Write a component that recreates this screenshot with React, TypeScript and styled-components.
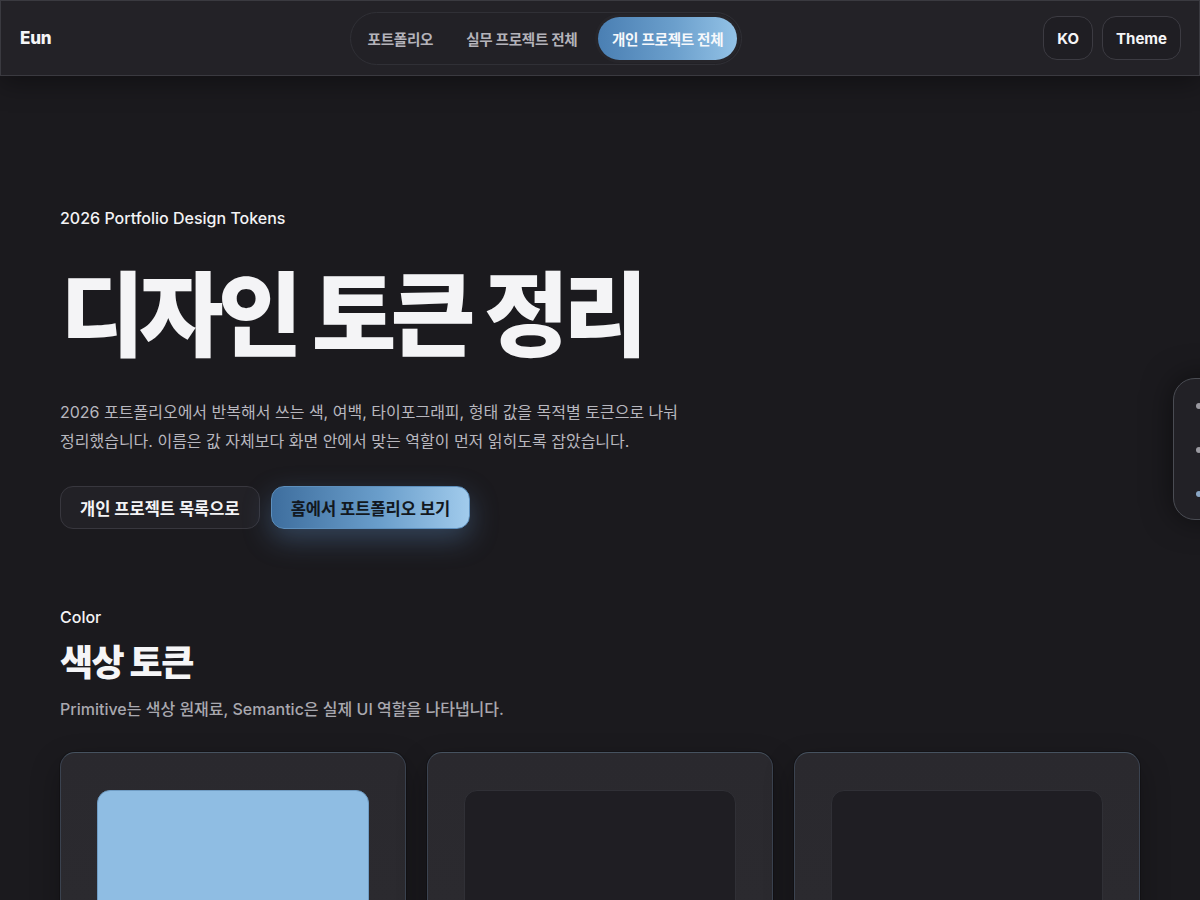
import React from 'react';
import styled, { createGlobalStyle } from 'styled-components';

const GlobalStyle = createGlobalStyle`
	body {
		margin: 0;
		background: #1b1a1e;
		color: #f3f3f5;
		font-family: Inter, 'Noto Sans CJK KR', sans-serif;
		overflow: hidden;
	}
`

const navItems = ['포트폴리오', '실무 프로젝트 전체', '개인 프로젝트 전체']

const swatches = [
	{ id: 'primary', fill: '#8fbde3', line: '#6f9cc4' },
	{ id: 'surface', fill: '#1f1e23', line: '#303036' },
	{ id: 'canvas', fill: '#1f1e23', line: '#303036' },
]

export default function App() {
	return (
		<>
			<GlobalStyle />
			<Header>
				<Logo>Eun</Logo>
				<Nav>
					{navItems.map((item, i) => (
						<NavItem key={item} $active={i === navItems.length - 1}>{item}</NavItem>
					))}
				</Nav>
				<Actions>
					<GhostButton>KO</GhostButton>
					<GhostButton>Theme</GhostButton>
				</Actions>
			</Header>

			<Main>
				<Hero>
					<Eyebrow>2026 Portfolio Design Tokens</Eyebrow>
					<Title>디자인 토큰 정리</Title>
					<Lead>
						2026 포트폴리오에서 반복해서 쓰는 색, 여백, 타이포그래피, 형태 값을 목적별 토큰으로 나눠
						정리했습니다. 이름은 값 자체보다 화면 안에서 맞는 역할이 먼저 읽히도록 잡았습니다.
					</Lead>
					<ButtonRow>
						<CtaButton>개인 프로젝트 목록으로</CtaButton>
						<CtaButton $primary>홈에서 포트폴리오 보기</CtaButton>
					</ButtonRow>
				</Hero>

				<Section>
					<SectionEyebrow>Color</SectionEyebrow>
					<SectionTitle>색상 토큰</SectionTitle>
					<SectionDesc>Primitive는 색상 원재료, Semantic은 실제 UI 역할을 나타냅니다.</SectionDesc>
					<CardGrid>
						{swatches.map((s) => (
							<Card key={s.id}>
								<Swatch $fill={s.fill} $line={s.line} />
							</Card>
						))}
					</CardGrid>
				</Section>
			</Main>

			<SideRail>
				<Dot />
				<Dot />
				<Dot $active />
			</SideRail>
		</>
	)
}

const Header = styled.header`
	position: relative;
	z-index: 2;
	height: 74px;
	display: flex;
	align-items: center;
	padding: 0 18px 0 19px;
	background: #232227;
	border: 1px solid #3a3a40;
	box-shadow: 0 8px 24px rgba(0, 0, 0, 0.35);
`

const Logo = styled.div`
	width: 330px;
	font-size: 17px;
	font-weight: 800;
	letter-spacing: -0.2px;
	color: #f5f5f7;
`

const Nav = styled.nav`
	display: flex;
	align-items: center;
	padding: 4px 4px 4px 0;
	border: 1px solid #303036;
	border-radius: 999px;
	background: #222126;
`

const NavItem = styled.a<{ $active?: boolean }>`
	display: flex;
	align-items: center;
	height: 43px;
	padding: 0 ${({ $active }) => ($active ? '14px' : '16.5px')};
	border-radius: 999px;
	font-size: 14.6px;
	font-weight: 700;
	letter-spacing: -0.3px;
	white-space: nowrap;
	color: ${({ $active }) => ($active ? '#f6f8fb' : '#b4b3ba')};
	background: ${({ $active }) => ($active ? 'linear-gradient(90deg, #4a7fb3 0%, #6b9fcc 55%, #93c2e6 100%)' : 'transparent')};
	box-shadow: ${({ $active }) => ($active ? '0 0 0 3px #26252a' : 'none')};
	margin-left: ${({ $active }) => ($active ? '4px' : '0')};
`

const Actions = styled.div`
	margin-left: auto;
	display: flex;
	gap: 9px;
`

const GhostButton = styled.button`
	height: 44px;
	padding: 0 13px;
	border: 1px solid #3c3b42;
	border-radius: 14px;
	background: #1f1e23;
	color: #f5f5f7;
	font-family: Inter, 'Noto Sans CJK KR', sans-serif;
	font-size: 15px;
	font-weight: 700;
`

const Main = styled.main`
	width: 1080px;
	margin: 0 auto;
	padding-top: 130px;
`

const Hero = styled.section`
	display: flex;
	flex-direction: column;
	align-items: flex-start;
`

const Eyebrow = styled.p`
	margin: 0;
	font-size: 16px;
	font-weight: 500;
	line-height: 24px;
	color: #f3f3f5;
`

const Title = styled.h1`
	margin: 30px 0 0;
	font-size: 92px;
	font-weight: 800;
	line-height: 112px;
	letter-spacing: -5.6px;
	color: #f4f4f6;
`

const Lead = styled.p`
	margin: 26px 0 0;
	max-width: 660px;
	font-size: 16px;
	line-height: 29px;
	word-break: keep-all;
	color: #b8b7be;
`

const ButtonRow = styled.div`
	display: flex;
	gap: 11px;
	margin-top: 30px;
`

const CtaButton = styled.button<{ $primary?: boolean }>`
	height: 43px;
	padding: 0 19px;
	border-radius: 13px;
	border: 1px solid ${({ $primary }) => ($primary ? '#5d8fbd' : '#38373e')};
	background: ${({ $primary }) => ($primary ? 'linear-gradient(90deg, #3e6e9e 0%, #6a9ecb 55%, #a1cbec 100%)' : '#222126')};
	color: ${({ $primary }) => ($primary ? '#121820' : '#f4f4f6')};
	box-shadow: ${({ $primary }) => ($primary ? '0 10px 28px rgba(96, 150, 205, 0.35)' : 'none')};
	font-family: Inter, 'Noto Sans CJK KR', sans-serif;
	font-size: 16.5px;
	font-weight: 700;
	white-space: nowrap;
`

const Section = styled.section`
	margin-top: 76px;
`

const SectionEyebrow = styled.p`
	margin: 0;
	font-size: 16px;
	font-weight: 500;
	line-height: 24px;
	color: #f3f3f5;
`

const SectionTitle = styled.h2`
	margin: 12px 0 0;
	font-size: 36px;
	font-weight: 800;
	line-height: 44px;
	letter-spacing: -1.5px;
	color: #f5f5f7;
`

const SectionDesc = styled.p`
	margin: 12px 0 0;
	font-size: 16px;
	font-weight: 500;
	line-height: 24px;
	color: #a9a8af;
`

const CardGrid = styled.div`
	display: grid;
	grid-template-columns: repeat(3, 1fr);
	gap: 21px;
	margin-top: 31px;
`

const Card = styled.div`
	height: 220px;
	padding: 37px 36px 0;
	border-radius: 15px;
	border: 1px solid #3b4350;
	border-top-color: #46525f;
	background: linear-gradient(180deg, #2a292e 0%, #2b2a2f 60%, #34333a 100%);
	box-shadow: 0 0 0 1px rgba(0, 0, 0, 0.2), 0 12px 30px rgba(0, 0, 0, 0.3);
`

const Swatch = styled.div<{ $fill: string; $line: string }>`
	height: 140px;
	border-radius: 13px;
	background: ${({ $fill }) => $fill};
	border: 1px solid ${({ $line }) => $line};
`

const SideRail = styled.div`
	position: fixed;
	top: 378px;
	left: 1173px;
	width: 60px;
	height: 142px;
	border-radius: 22px;
	border: 1px solid #4a4c53;
	background: #222126;
	box-shadow: 0 0 30px rgba(0, 0, 0, 0.5);
	display: flex;
	flex-direction: column;
	justify-content: space-between;
	padding: 24px 0 22px 22px;
	box-sizing: border-box;
`

const Dot = styled.span<{ $active?: boolean }>`
	width: 6px;
	height: 6px;
	border-radius: 50%;
	background: ${({ $active }) => ($active ? '#8aa6c4' : '#9a99a0')};
`
